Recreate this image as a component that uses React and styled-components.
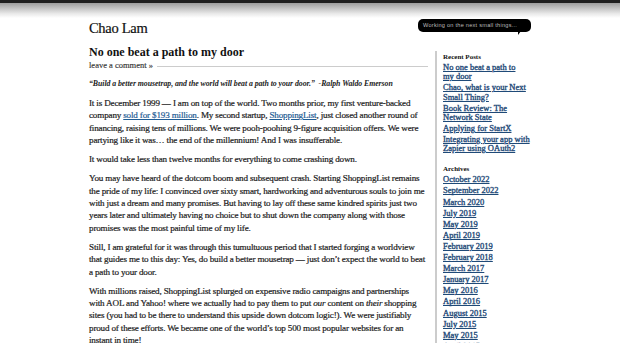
import React from 'react';
import styled, { createGlobalStyle } from 'styled-components';

const GlobalStyle = createGlobalStyle`
  html, body {
    margin: 0;
    padding: 0;
    background: #fff;
  }
  body {
    font-family: "Liberation Serif", "Times New Roman", serif;
    color: #222;
  }
`;

// titles split where the sidebar wraps them
const recentPosts = [
  ['No one beat a path to', 'my door'],
  ['Chao, what is your Next', 'Small Thing?'],
  ['Book Review: The', 'Network State'],
  ['Applying for StartX'],
  ['Integrating your app with', 'Zapier using OAuth2'],
];

const archives = [
  'October 2022', 'September 2022', 'March 2020', 'July 2019', 'May 2019',
  'April 2019', 'February 2019', 'February 2018', 'March 2017', 'January 2017',
  'May 2016', 'April 2016', 'August 2015', 'July 2015', 'May 2015', 'April 2015',
];

function App() {
  return (
    <>
      <GlobalStyle />
      <TopBar />
      <Wrapper>
        <Header>
          <SiteTitle>Chao Lam</SiteTitle>
          <Bubble>Working on the next small things...</Bubble>
        </Header>
        <Columns>
          <Main>
            <PostTitle>No one beat a path to my door</PostTitle>
            <Meta>
              <span>leave a comment »</span>
              <MetaRule />
            </Meta>
            <Quote>“Build a better mousetrap, and the world will beat a path to your door.”&nbsp; -Ralph Waldo Emerson</Quote>
            <Para>
              <Line>It is December 1999 — I am on top of the world. Two months prior, my first venture-backed</Line>
              <Line>company <Link href="#">sold for $193 million</Link>. My second startup, <Link href="#">ShoppingList</Link>, just closed another round of</Line>
              <Line>financing, raising tens of millions. We were pooh-poohing 9-figure acquisition offers. We were</Line>
              <Line>partying like it was… the end of the millennium! And I was insufferable.</Line>
            </Para>
            <Para>
              <Line>It would take less than twelve months for everything to come crashing down.</Line>
            </Para>
            <Para>
              <Line>You may have heard of the dotcom boom and subsequent crash. Starting ShoppingList remains</Line>
              <Line>the pride of my life: I convinced over sixty smart, hardworking and adventurous souls to join me</Line>
              <Line>with just a dream and many promises. But having to lay off these same kindred spirits just two</Line>
              <Line>years later and ultimately having no choice but to shut down the company along with those</Line>
              <Line>promises was the most painful time of my life.</Line>
            </Para>
            <Para>
              <Line>Still, I am grateful for it was through this tumultuous period that I started forging a worldview</Line>
              <Line>that guides me to this day: Yes, do build a better mousetrap — just don’t expect the world to beat</Line>
              <Line>a path to your door.</Line>
            </Para>
            <Para>
              <Line>With millions raised, ShoppingList splurged on expensive radio campaigns and partnerships</Line>
              <Line>with AOL and Yahoo! where we actually had to pay them to put <em>our</em> content on <em>their</em> shopping</Line>
              <Line>sites (you had to be there to understand this upside down dotcom logic!). We were justifiably</Line>
              <Line>proud of these efforts. We became one of the world’s top 500 most popular websites for an</Line>
              <Line>instant in time!</Line>
            </Para>
          </Main>
          <Sidebar>
            <WidgetTitle>Recent Posts</WidgetTitle>
            <WidgetList>
              {recentPosts.map((lines) => (
                <li key={lines[0]}>
                  <SideLink href="#">
                    {lines.map((l, i) => (
                      <React.Fragment key={l}>{i > 0 && <br />}{l}</React.Fragment>
                    ))}
                  </SideLink>
                </li>
              ))}
            </WidgetList>
            <WidgetTitle>Archives</WidgetTitle>
            <WidgetList>
              {archives.map((a) => (
                <li key={a}><SideLink href="#">{a}</SideLink></li>
              ))}
            </WidgetList>
          </Sidebar>
        </Columns>
      </Wrapper>
    </>
  );
}

export default App;

const TopBar = styled.div`
  height: 15px;
  border-top: 3px solid #1e1e1e;
  background: linear-gradient(#9c9c9c, #e8e8e8 70%, #fff);
`;

const Wrapper = styled.div`
  width: 442px;
  margin: 0 auto;
`;

const Header = styled.div`
  display: flex;
  justify-content: space-between;
  align-items: flex-start;
  height: 27px;
`;

const SiteTitle = styled.h1`
  margin: 0;
  font-size: 14.5px;
  font-weight: normal;
  line-height: 20px;
  letter-spacing: -0.3px;
  color: #111;
  -webkit-text-stroke: 0.2px #111;
`;

const Bubble = styled.div`
  position: relative;
  margin-top: 1px;
  width: 113px;
  height: 13px;
  box-sizing: border-box;
  border-radius: 5px;
  background: #000;
  color: #bbb;
  font-family: "Liberation Sans", Arial, sans-serif;
  font-size: 5.6px;
  line-height: 13px;
  letter-spacing: 0.25px;
  padding-left: 5px;
  white-space: nowrap;
  &::after {
    content: "";
    position: absolute;
    right: 10px;
    bottom: -3px;
    border-top: 4px solid #000;
    border-right: 3px solid transparent;
  }
`;

const Columns = styled.div`
  display: flex;
  align-items: flex-start;
`;

const Main = styled.div`
  width: 339px;
  flex: none;
`;

const PostTitle = styled.h2`
  margin: 0;
  font-size: 12px;
  font-weight: bold;
  line-height: 14px;
  color: #111;
`;

const Meta = styled.div`
  display: flex;
  align-items: center;
  gap: 4px;
  font-size: 8.5px;
  line-height: 12px;
  color: #333;
  padding-bottom: 7px;
  -webkit-text-stroke: 0.15px #333;
`;

const MetaRule = styled.div`
  flex: 1;
  height: 1px;
  background: #ccc;
  margin-top: 3px;
`;

const Quote = styled.p`
  margin: 0 0 7px;
  font-size: 7.8px;
  font-style: italic;
  font-weight: bold;
  line-height: 12px;
  letter-spacing: -0.05px;
  color: #222;
`;

const Para = styled.p`
  margin: 0 0 7px;
  font-size: 9.1px;
  line-height: 12.3px;
  letter-spacing: -0.17px;
  color: #1a1a1a;
  -webkit-text-stroke: 0.2px #1a1a1a;
`;

const Line = styled.span`
  display: block;
  white-space: nowrap;
`;

const Link = styled.a`
  color: #1f5c94;
  text-decoration: underline;
  -webkit-text-stroke: 0.2px #1f5c94;
`;

const Sidebar = styled.div`
  margin-left: 7px;
  margin-top: 6px;
  padding-left: 6px;
  border-left: 2px solid #ccc;
  flex: 1;
  min-height: 300px;
`;

const WidgetTitle = styled.h3`
  margin: 0;
  padding-top: 1px;
  font-size: 7px;
  font-weight: bold;
  line-height: 11px;
  color: #111;
`;

const WidgetList = styled.ul`
  list-style: none;
  margin: 0 0 10px;
  padding: 0;
  li {
    margin: 0 0 1.9px;
    font-size: 8.5px;
    line-height: 9.2px;
    white-space: nowrap;
  }
`;

const SideLink = styled.a`
  color: #1f4a78;
  text-decoration: underline;
  -webkit-text-stroke: 0.35px #1f4a78;
`;
